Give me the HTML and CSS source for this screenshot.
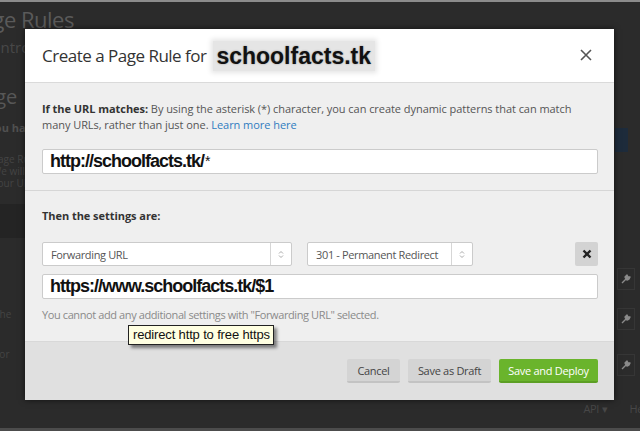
FILE: index.html
```html
<!DOCTYPE html>
<html>
<head>
<meta charset="utf-8">
<link rel="stylesheet" href="styles.css">
</head>
<body>
<div class="screen">
  <div class="bg">
    <div class="bg-main">
      <div class="bg-left">
        <h1 class="bg-title">Page Rules</h1>
        <p class="bg-sub">Control</p>
        <h2 class="bg-h2">Page</h2>
        <p class="bg-bold">You have</p>
        <p class="bg-small">Page Rul<br>We will<br>Your URL</p>
        <div class="bg-band"></div>
        <p class="bg-tiny t1">the</p>
        <p class="bg-tiny t2">for</p>
      </div>
      <div class="bg-right">
        <div class="bg-navy"></div>
        <div class="bg-wrench w1"><svg width="10" height="10" viewBox="0 0 10 10"><path d="M1 9 L5 5 M5 5 L4 3 L6 1 L7 3 L9 3 L8 5 L6 6 Z" fill="#8a8a8a" stroke="#8a8a8a" stroke-width="1.4" stroke-linejoin="round"/></svg></div>
        <div class="bg-wrench w2"><svg width="10" height="10" viewBox="0 0 10 10"><path d="M1 9 L5 5 M5 5 L4 3 L6 1 L7 3 L9 3 L8 5 L6 6 Z" fill="#8a8a8a" stroke="#8a8a8a" stroke-width="1.4" stroke-linejoin="round"/></svg></div>
        <div class="bg-wrench w3"><svg width="10" height="10" viewBox="0 0 10 10"><path d="M1 9 L5 5 M5 5 L4 3 L6 1 L7 3 L9 3 L8 5 L6 6 Z" fill="#8a8a8a" stroke="#8a8a8a" stroke-width="1.4" stroke-linejoin="round"/></svg></div>
      </div>
    </div>
    <div class="bg-foot"><span>API ▾</span><span>Help</span></div>
  </div>

  <div class="modal">
    <div class="modal-head">
      <h3 class="modal-title">Create a Page Rule for <span class="domain">schoolfacts.tk</span></h3>
      <svg class="close" width="12" height="12" viewBox="0 0 12 12"><path d="M1 1 L11 11 M11 1 L1 11" stroke="#555" stroke-width="1.6"/></svg>
    </div>
    <div class="modal-sec sec1">
      <p class="desc"><b>If the URL matches:</b> By using the asterisk (*) character, you can create dynamic patterns that can match many URLs, rather than just one. <a class="link">Learn more here</a></p>
      <div class="input big">http://schoolfacts.tk/<span class="star">*</span></div>
    </div>
    <div class="modal-sec sec2">
      <p class="desc"><b>Then the settings are:</b></p>
      <div class="row">
        <div class="select s1"><span class="sel-text">Forwarding URL</span><span class="sel-arrow"><svg width="6" height="9" viewBox="0 0 6 9"><path d="M1 3.5 L3 1.5 L5 3.5 M1 5.5 L3 7.5 L5 5.5" fill="none" stroke="#aaa" stroke-width="1"/></svg></span></div>
        <div class="select s2"><span class="sel-text">301 - Permanent Redirect</span><span class="sel-arrow"><svg width="6" height="9" viewBox="0 0 6 9"><path d="M1 3.5 L3 1.5 L5 3.5 M1 5.5 L3 7.5 L5 5.5" fill="none" stroke="#aaa" stroke-width="1"/></svg></span></div>
        <div class="xbtn"><svg width="10" height="10" viewBox="0 0 10 10"><path d="M1.5 1.5 L8.5 8.5 M8.5 1.5 L1.5 8.5" stroke="#222" stroke-width="2.4"/></svg></div>
      </div>
      <div class="input big">https://www.schoolfacts.tk/$1</div>
      <p class="help">You cannot add any additional settings with "Forwarding URL" selected.</p>
      <div class="tooltip">redirect http to free https</div>
    </div>
    <div class="modal-foot">
      <button class="btn b-cancel">Cancel</button>
      <button class="btn b-draft">Save as Draft</button>
      <button class="btn green">Save and Deploy</button>
    </div>
  </div>
</div>
</body>
</html>
```
FILE: styles.css
```css
* { box-sizing: border-box; }
html, body { margin: 0; padding: 0; }
body { background: #2b2b2b; font-family: "Open Sans", "Noto Sans", sans-serif; }

.screen {
  width: 640px;
  height: 431px;
  position: relative;
  overflow: hidden;
  background: #2b2b2b;
  border-top: 2px solid #8c8c8c;
  border-bottom: 3px solid #4c4c4c;
}

/* background page (dimmed) */
.bg { display: flex; flex-direction: column; height: 100%; }
.bg-main { display: flex; flex: 1; }
.bg-left { flex: 1; margin-left: -32px; color: #555; white-space: nowrap; }
.bg-title { margin: 3px 0 0; font-size: 22px; font-weight: 400; letter-spacing: -0.5px; line-height: 28px; color: #5a5a5a; }
.bg-sub { margin: 4px 0 0; padding-left: 14px; font-size: 15px; line-height: 20px; color: #484848; }
.bg-h2 { margin: 28px 0 0; padding-left: 4px; font-size: 20px; font-weight: 400; line-height: 24px; color: #575757; }
.bg-bold { margin: 12px 0 0; padding-left: 20px; font-size: 11px; font-weight: 700; line-height: 14px; color: #505050; }
.bg-small { margin: 18px 0 0; padding-left: 24px; font-size: 10px; line-height: 12px; color: #444; }
.bg-band { height: 34px; margin: 15px 0 0; background: #242424; }
.bg-tiny { margin: 0; padding-left: 28px; font-size: 10px; line-height: 12px; color: #444; }
.t1 { margin-top: 70px; }
.t2 { margin-top: 28px; }

.bg-right { width: 26px; display: flex; flex-direction: column; align-items: flex-start; padding-top: 126px; }
.bg-navy { width: 13px; height: 24px; margin-left: 1px; background: #1d2b3b; }
.bg-wrench { width: 18px; height: 22px; margin-left: 3px; border: 1px solid #363636; display: flex; align-items: center; justify-content: center; }
.w1 { margin-top: 116px; }
.w2 { margin-top: 18px; }
.w3 { margin-top: 24px; }

.bg-foot { height: 26px; display: flex; justify-content: flex-end; gap: 22px; margin-right: -12px; font-size: 11px; line-height: 14px; color: #474747; letter-spacing: -0.3px; }

/* modal */
.modal {
  position: absolute;
  left: 25px;
  top: 27px;
  width: 589px;
  background: #efefef;
  box-shadow: 0 0 6px rgba(0, 0, 0, 0.6);
  color: #444;
}
.modal-head {
  height: 54px;
  background: #fff;
  border-bottom: 1px solid #dadada;
  display: flex;
  align-items: center;
  padding: 0 17px 0 17px;
}
.modal-title {
  margin: 0;
  flex: 1;
  font-size: 17px;
  font-weight: 400;
  letter-spacing: -0.5px;
  color: #333;
  line-height: 22px;
}
.domain {
  display: inline-block;
  margin-left: 3px;
  padding: 2px 4px 2px 3px;
  background: #e5e5e5;
  box-shadow: 0 0 5px 2px #e5e5e5;
  font-family: "Liberation Sans", Arial, sans-serif;
  font-weight: 700;
  font-size: 23px;
  letter-spacing: 0;
  color: #111;
  line-height: 26px;
  text-shadow: 0 0 2px rgba(0, 0, 0, 0.35);
  vertical-align: -2px;
}
.close { margin-right: 5px; margin-top: -2px; }

.modal-sec { padding: 0 16px 0 17px; }
.sec1 { padding-top: 18px; padding-bottom: 16px; border-bottom: 1px solid #d6d6d6; }
.sec2 { padding-top: 17px; padding-bottom: 18px; position: relative; }

.desc { margin: 0; font-size: 11px; line-height: 16px; letter-spacing: -0.05px; color: #555; }
.desc b { color: #333; }
.link { color: #2f7cc0; }

.input {
  height: 25px;
  background: #fff;
  border: 1px solid #cbcbcb;
  border-radius: 2px;
  padding-left: 7px;
  display: flex;
  align-items: center;
}
.big {
  font-family: "Liberation Sans", Arial, sans-serif;
  font-weight: 700;
  font-size: 18px;
  letter-spacing: -1px;
  color: #111;
}
.star { font-weight: 400; font-size: 14px; align-self: flex-start; margin-top: 3px; margin-left: 1px; }
.sec1 .input { margin-top: 16px; }

.row { display: flex; gap: 15px; margin-top: 18px; }
.select {
  height: 24px;
  background: #fff;
  border: 1px solid #cbcbcb;
  border-radius: 2px;
  display: flex;
  align-items: center;
}
.s1 { width: 250px; }
.s2 { width: 166px; }
.sel-text { flex: 1; padding-left: 8px; font-size: 11px; letter-spacing: -0.35px; color: #555; }
.sel-arrow { width: 21px; height: 100%; border-left: 1px solid #d6d6d6; display: flex; align-items: center; justify-content: center; }
.xbtn {
  margin-left: auto;
  width: 23px;
  height: 24px;
  background: #d3d3d3;
  border-radius: 2px;
  display: flex;
  align-items: center;
  justify-content: center;
}
.sec2 .input { margin-top: 8px; }
.help { margin: 8px 0 0; font-size: 11px; line-height: 16px; letter-spacing: -0.4px; color: #8a8a8a; }

.tooltip {
  position: absolute;
  left: 103px;
  top: 134px;
  height: 20px;
  padding: 0 3px 0 4px;
  background: #ffffe1;
  border: 1px solid #222;
  box-shadow: 3px 3px 3px rgba(0, 0, 0, 0.45);
  font-family: "Liberation Sans", Arial, sans-serif;
  font-size: 13px;
  letter-spacing: -0.15px;
  line-height: 18px;
  color: #111;
  z-index: 2;
}

.modal-foot {
  background: #e0e0e0;
  border-top: 1px solid #d8d8d8;
  height: 59px;
  display: flex;
  justify-content: flex-end;
  align-items: flex-start;
  gap: 8px;
  padding: 17px 16px 0 0;
}
.btn {
  height: 24px;
  border: 0;
  border-bottom: 2px solid #c3c3c3;
  border-radius: 2px;
  background: #d4d4d4;
  color: #444;
  font-family: "Open Sans", "Noto Sans", sans-serif;
  font-size: 11px;
  letter-spacing: -0.3px;
  padding: 0;
  white-space: nowrap;
  text-align: center;
}
.b-cancel { width: 53px; }
.b-draft { width: 83px; }
.green { width: 99px; background: #6ab42c; border-bottom-color: #5c9f24; color: #fff; }
```
